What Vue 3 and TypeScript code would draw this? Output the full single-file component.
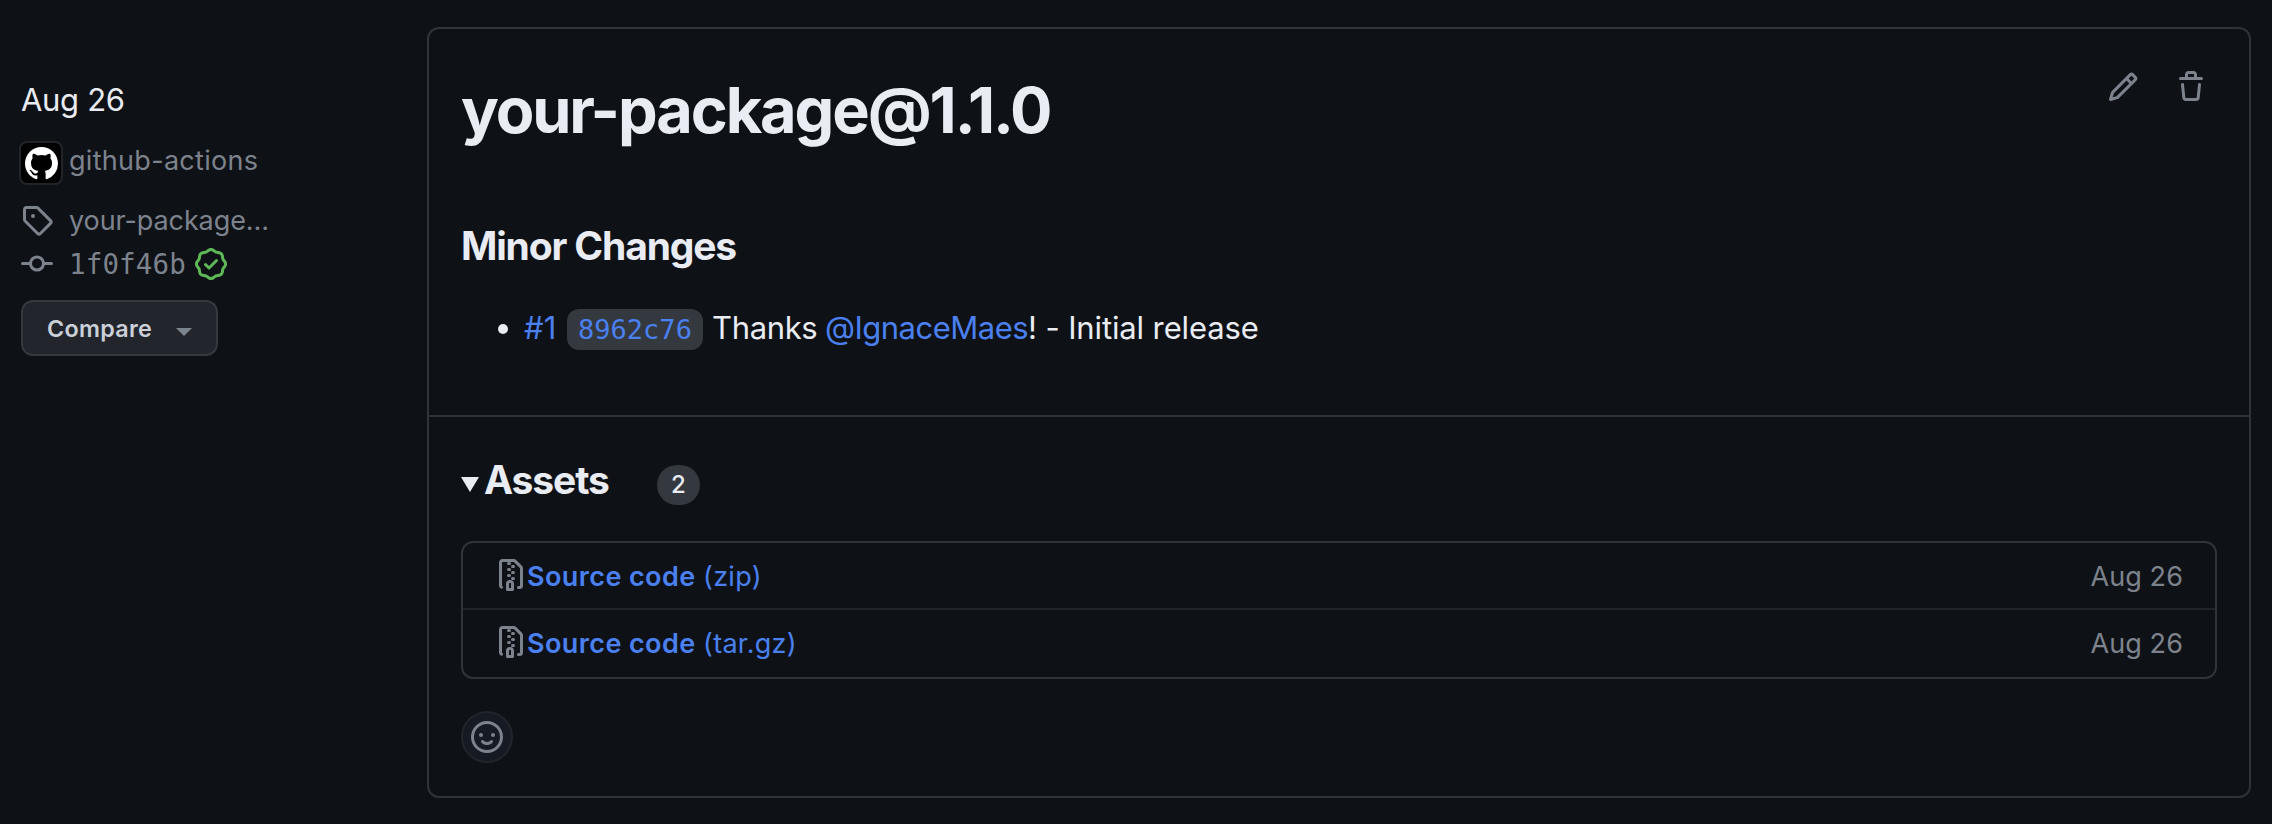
<script setup lang="ts">
interface Asset {
  name: string
  format: string
  date: string
}

const assets: Asset[] = [
  { name: 'Source code', format: '(zip)', date: 'Aug 26' },
  { name: 'Source code', format: '(tar.gz)', date: 'Aug 26' },
]
</script>

<template>
  <div class="page">
    <aside class="meta">
      <div class="date">Aug 26</div>
      <div class="meta-row author">
        <span class="avatar">
          <svg viewBox="0 0 16 16" width="33" height="33"><path fill="#fff" d="M8 0C3.58 0 0 3.58 0 8c0 3.54 2.29 6.53 5.47 7.59.4.07.55-.17.55-.38 0-.19-.01-.82-.01-1.49-2.01.37-2.53-.49-2.69-.94-.09-.23-.48-.94-.82-1.13-.28-.15-.68-.52-.01-.53.63-.01 1.08.58 1.23.82.72 1.21 1.87.87 2.33.66.07-.52.28-.87.51-1.07-1.78-.2-3.64-.89-3.64-3.95 0-.87.31-1.59.82-2.15-.08-.2-.36-1.02.08-2.12 0 0 .67-.21 2.2.82.64-.18 1.32-.27 2-.27s1.36.09 2 .27c1.53-1.04 2.2-.82 2.2-.82.44 1.1.16 1.92.08 2.12.51.56.82 1.27.82 2.15 0 3.07-1.87 3.75-3.65 3.95.29.25.54.73.54 1.48 0 1.07-.01 1.93-.01 2.2 0 .21.15.46.55.38A8.01 8.01 0 0 0 16 8c0-4.42-3.58-8-8-8Z" /></svg>
        </span>
        <span class="author-name">github-actions</span>
      </div>
      <div class="meta-row tag">
        <svg class="icon" viewBox="0 0 16 16"><path d="M1 7.775V2.75C1 1.784 1.784 1 2.75 1h5.025c.464 0 .91.184 1.238.513l6.25 6.25a1.75 1.75 0 0 1 0 2.474l-5.026 5.026a1.75 1.75 0 0 1-2.474 0l-6.25-6.25A1.752 1.752 0 0 1 1 7.775Zm1.5 0c0 .066.026.13.073.177l6.25 6.25a.25.25 0 0 0 .354 0l5.025-5.025a.25.25 0 0 0 0-.354l-6.25-6.25a.25.25 0 0 0-.177-.073H2.75a.25.25 0 0 0-.25.25ZM6 5a1 1 0 1 1 0 2 1 1 0 0 1 0-2Z" /></svg>
        <span class="tag-name">your-package…</span>
      </div>
      <div class="meta-row commit">
        <svg class="icon" viewBox="0 0 16 16"><path d="M11.93 8.5a4.002 4.002 0 0 1-7.86 0H.75a.75.75 0 0 1 0-1.5h3.32a4.002 4.002 0 0 1 7.86 0h3.32a.75.75 0 0 1 0 1.5Zm-1.43-.75a2.5 2.5 0 1 0-5 0 2.5 2.5 0 0 0 5 0Z" /></svg>
        <span class="sha">1f0f46b</span>
        <svg class="icon verified" viewBox="0 0 16 16"><path d="m9.585.52.929.68c.153.112.331.186.518.215l1.138.175a2.678 2.678 0 0 1 2.24 2.24l.174 1.139c.029.187.103.365.215.518l.68.928a2.677 2.677 0 0 1 0 3.17l-.68.928a1.174 1.174 0 0 0-.215.518l-.175 1.138a2.678 2.678 0 0 1-2.241 2.241l-1.138.175a1.17 1.17 0 0 0-.518.215l-.928.68a2.677 2.677 0 0 1-3.17 0l-.928-.68a1.174 1.174 0 0 0-.518-.215L3.83 14.41a2.678 2.678 0 0 1-2.24-2.24l-.175-1.138a1.17 1.17 0 0 0-.215-.518l-.68-.928a2.677 2.677 0 0 1 0-3.17l.68-.928c.112-.153.186-.331.215-.518l.175-1.14a2.678 2.678 0 0 1 2.24-2.24l1.139-.175c.187-.029.365-.103.518-.215l.928-.68a2.677 2.677 0 0 1 3.17 0ZM7.303 1.728l-.927.68a2.67 2.67 0 0 1-1.18.489l-1.137.174a1.179 1.179 0 0 0-.987.987l-.174 1.136a2.677 2.677 0 0 1-.489 1.18l-.68.928a1.18 1.18 0 0 0 0 1.394l.68.927c.256.348.424.753.489 1.18l.174 1.137c.078.509.478.909.987.987l1.136.174a2.67 2.67 0 0 1 1.18.489l.928.68c.414.305.979.305 1.394 0l.927-.68a2.67 2.67 0 0 1 1.18-.489l1.137-.174a1.18 1.18 0 0 0 .987-.987l.174-1.136a2.67 2.67 0 0 1 .489-1.18l.68-.928a1.176 1.176 0 0 0 0-1.394l-.68-.927a2.686 2.686 0 0 1-.489-1.18l-.174-1.137a1.179 1.179 0 0 0-.987-.987l-1.136-.174a2.677 2.677 0 0 1-1.18-.489l-.928-.68a1.176 1.176 0 0 0-1.394 0ZM11.28 6.78l-3.75 3.75a.75.75 0 0 1-1.06 0L4.72 8.78a.751.751 0 0 1 .018-1.042.751.751 0 0 1 1.042-.018L7 8.94l3.22-3.22a.751.751 0 0 1 1.042.018.751.751 0 0 1 .018 1.042Z" /></svg>
      </div>
      <button class="compare" type="button">
        <span>Compare</span>
        <i class="caret"></i>
      </button>
    </aside>

    <main class="card">
      <section class="notes">
        <header class="head">
          <h1>your-package@1.1.0</h1>
          <div class="actions">
            <svg class="icon" viewBox="0 0 16 16"><path d="M11.013 1.427a1.75 1.75 0 0 1 2.474 0l1.086 1.086a1.75 1.75 0 0 1 0 2.474l-8.61 8.61c-.21.21-.47.364-.756.445l-3.251.93a.75.75 0 0 1-.927-.928l.929-3.25c.081-.286.235-.547.445-.758l8.61-8.61Zm.176 4.823L9.75 4.81l-6.286 6.287a.253.253 0 0 0-.064.108l-.558 1.953 1.953-.558a.253.253 0 0 0 .108-.064Zm1.238-3.763a.25.25 0 0 0-.354 0L10.811 3.75l1.439 1.44 1.263-1.263a.25.25 0 0 0 0-.354Z" /></svg>
            <svg class="icon" viewBox="0 0 16 16"><path d="M11 1.75V3h2.25a.75.75 0 0 1 0 1.5H2.75a.75.75 0 0 1 0-1.5H5V1.75C5 .784 5.784 0 6.75 0h2.5C10.216 0 11 .784 11 1.75ZM4.496 6.675l.66 6.6a.25.25 0 0 0 .249.225h5.19a.25.25 0 0 0 .249-.225l.66-6.6a.75.75 0 0 1 1.492.149l-.66 6.6A1.748 1.748 0 0 1 10.595 15h-5.19a1.75 1.75 0 0 1-1.741-1.575l-.66-6.6a.75.75 0 1 1 1.492-.15ZM6.5 1.75V3h3V1.75a.25.25 0 0 0-.25-.25h-2.5a.25.25 0 0 0-.25.25Z" /></svg>
          </div>
        </header>
        <h2>Minor Changes</h2>
        <div class="change">
          <i class="bullet"></i>
          <a class="pr">#1</a>
          <code>8962c76</code>
          <span class="thanks">Thanks</span>
          <a class="user">@IgnaceMaes</a>
          <span class="release">! - Initial release</span>
        </div>
      </section>

      <section class="assets">
        <div class="summary">
          <svg class="disclosure" viewBox="0 0 18 15"><path d="M0 0h18L9 15Z" /></svg>
          <h3>Assets</h3>
          <span class="count">2</span>
        </div>
        <div class="list">
          <div v-for="asset in assets" :key="asset.format" class="asset">
            <svg class="icon" viewBox="0 0 16 16"><path d="M3.5 1.75v11.5c0 .09.048.173.126.217a.75.75 0 0 1-.752 1.298A1.748 1.748 0 0 1 2 13.25V1.75C2 .784 2.784 0 3.75 0h5.586c.464 0 .909.185 1.237.513l2.914 2.914c.329.328.513.773.513 1.237v8.586A1.75 1.75 0 0 1 12.25 15h-.5a.75.75 0 0 1 0-1.5h.5a.25.25 0 0 0 .25-.25V4.664a.25.25 0 0 0-.073-.177L9.513 1.573a.25.25 0 0 0-.177-.073H7.25a.75.75 0 0 1 0 1.5h-.5a.75.75 0 0 1 0-1.5h-3a.25.25 0 0 0-.25.25Zm3.75 8.75h.5c.966 0 1.75.784 1.75 1.75v3a.75.75 0 0 1-.75.75h-2.5a.75.75 0 0 1-.75-.75v-3c0-.966.784-1.75 1.75-1.75ZM6 5.25a.75.75 0 0 1 .75-.75h.5a.75.75 0 0 1 0 1.5h-.5A.75.75 0 0 1 6 5.25Zm.75 2.25h.5a.75.75 0 0 1 0 1.5h-.5a.75.75 0 0 1 0-1.5ZM8 6.75A.75.75 0 0 1 8.75 6h.5a.75.75 0 0 1 0 1.5h-.5A.75.75 0 0 1 8 6.75ZM8.75 3h.5a.75.75 0 0 1 0 1.5h-.5a.75.75 0 0 1 0-1.5ZM8 9.75A.75.75 0 0 1 8.75 9h.5a.75.75 0 0 1 0 1.5h-.5A.75.75 0 0 1 8 9.75Zm-1 2.5v2.25h1v-2.25a.25.25 0 0 0-.25-.25h-.5a.25.25 0 0 0-.25.25Z" /></svg>
            <a class="asset-name">{{ asset.name }}</a>
            <a class="asset-format">{{ asset.format }}</a>
            <span class="asset-date">{{ asset.date }}</span>
          </div>
        </div>
        <button class="react" type="button">
          <svg class="icon" viewBox="0 0 16 16"><path d="M8 0a8 8 0 1 1 0 16A8 8 0 0 1 8 0ZM1.5 8a6.5 6.5 0 1 0 13 0 6.5 6.5 0 0 0-13 0Zm3.82 1.636a.75.75 0 0 1 1.038.175l.007.009c.103.118.22.222.35.31.264.178.683.37 1.285.37.602 0 1.02-.192 1.285-.371.13-.088.247-.192.35-.31l.007-.008a.75.75 0 0 1 1.222.87l-.022-.015c.02.013.021.015.021.015v.001l-.001.002-.002.003-.005.007-.014.019a2.066 2.066 0 0 1-.184.213c-.16.166-.338.316-.53.445-.63.418-1.37.638-2.127.629-.946 0-1.652-.308-2.126-.63a3.331 3.331 0 0 1-.715-.657l-.014-.02-.005-.006-.002-.003v-.002h-.001l.613-.432-.614.43a.75.75 0 0 1 .183-1.044ZM12 7a1 1 0 1 1-2 0 1 1 0 0 1 2 0ZM5 8a1 1 0 1 1 0-2 1 1 0 0 1 0 2Z" /></svg>
        </button>
      </section>
    </main>
  </div>
</template>

<style>
body {
  background: #0e1116;
}
</style>

<style scoped>
.page {
  box-sizing: border-box;
  width: 2272px;
  height: 824px;
  display: flex;
  align-items: flex-start;
  padding: 27px 21px 0;
  background: #0e1116;
  color: #e9ecf2;
  font-family: Inter, "Liberation Sans", sans-serif;
  white-space: nowrap;
}
.page * {
  box-sizing: border-box;
}
.icon {
  display: block;
  flex: none;
  width: 32px;
  height: 32px;
  fill: #7d838d;
}
.meta {
  width: 406px;
  padding-top: 49px;
  color: #7d838d;
  font-size: 27px;
}
.date {
  color: #e9ecf2;
  font-size: 31px;
  line-height: 48px;
  letter-spacing: -0.3px;
}
.meta-row {
  display: flex;
  align-items: center;
  height: 44px;
  line-height: 44px;
}
.author {
  margin: 14px 0 16px -2px;
}
.avatar {
  display: flex;
  align-items: center;
  justify-content: center;
  width: 44px;
  height: 44px;
  margin: 6px 6px 0 0;
  border: 2px solid #222429;
  border-radius: 8px;
  background: #000;
}
.author-name {
  padding-top: 1px;
  letter-spacing: 0.3px;
}
.tag-name,
.sha {
  margin-left: 16px;
}
.tag-name {
  padding-top: 1px;
  letter-spacing: -0.1px;
}
.sha {
  font-family: "DejaVu Sans Mono", monospace;
  font-size: 27.5px;
  letter-spacing: 0.15px;
}
.verified {
  margin-left: 9px;
  fill: #5fb858;
}
.compare {
  display: flex;
  align-items: center;
  width: 197px;
  height: 56px;
  margin: 14px 0 0;
  padding: 0 24px;
  border: 2px solid #35383e;
  border-radius: 12px;
  background: #22252c;
  color: #cad0d8;
  font: 600 23.3px/52px Inter, sans-serif;
  letter-spacing: 0.3px;
}
.compare span {
  padding-top: 1px;
}
.caret {
  margin: 8px 0 0 24px;
  border: 8px solid transparent;
  border-top-color: #7d838d;
  border-bottom: 0;
}
.card {
  width: 1824px;
  height: 771px;
  border: 2px solid #303338;
  border-radius: 12px;
}
.notes {
  height: 388px;
  padding: 42px 32px 0;
  border-bottom: 2px solid #303338;
}
.head {
  display: flex;
  justify-content: space-between;
}
h1,
h2,
h3 {
  margin: 0;
  font-weight: 700;
}
h1 {
  font-size: 63px;
  line-height: 78px;
  letter-spacing: -2.1px;
}
.actions {
  display: flex;
  gap: 36px;
  padding-right: 10px;
}
h2 {
  margin-top: 72px;
  font-size: 39px;
  line-height: 50px;
  letter-spacing: -1.15px;
}
.change {
  display: flex;
  align-items: center;
  height: 48px;
  margin-top: 33px;
  padding-left: 37px;
  font-size: 31px;
  line-height: 48px;
}
.bullet {
  width: 10px;
  height: 10px;
  margin: 2px 16px 0 0;
  border-radius: 50%;
  background: #e9ecf2;
}
a {
  color: #4a80f0;
}
.pr {
  width: 43px;
}
code {
  width: 136px;
  height: 41px;
  margin: 3px 9px 0 0;
  border-radius: 12px;
  background: #34383f;
  color: #4a80f0;
  font: 27px/41px "DejaVu Sans Mono", monospace;
  text-align: center;
}
.thanks {
  width: 113px;
  letter-spacing: -0.35px;
}
.user {
  width: 203px;
  letter-spacing: -0.5px;
}
.release {
  letter-spacing: -0.12px;
}
.assets {
  padding: 33px 32px 0;
}
.summary {
  display: flex;
  align-items: center;
  height: 60px;
}
.disclosure {
  width: 18px;
  height: 15px;
  margin: 9px 5px 0 0;
  fill: #e9ecf2;
}
h3 {
  width: 173px;
  font-size: 39px;
  line-height: 60px;
  letter-spacing: -1.1px;
}
.count {
  width: 43px;
  height: 40px;
  margin-top: 10px;
  border-radius: 20px;
  background: #34383f;
  font-size: 24px;
  font-weight: 500;
  line-height: 40px;
  text-align: center;
}
.list {
  height: 138px;
  margin-top: 31px;
  border: 2px solid #303338;
  border-radius: 12px;
}
.asset {
  display: flex;
  align-items: flex-start;
  height: 67px;
  padding: 10px 32px 0 32px;
  font-size: 27px;
  line-height: 48px;
}
.asset:first-child {
  border-bottom: 2px solid #212429;
}
.asset .icon {
  margin-top: 6px;
}
.asset-name {
  width: 176px;
  font-weight: 600;
  letter-spacing: 0.4px;
}
.asset-format {
  letter-spacing: 0.3px;
}
.asset-date {
  margin-left: auto;
  color: #7d838d;
  letter-spacing: 0.1px;
}
.react {
  display: flex;
  align-items: center;
  justify-content: center;
  width: 52px;
  height: 52px;
  margin: 32px 0 0;
  padding: 0;
  border: 2px solid #212429;
  border-radius: 50%;
  background: #161a22;
}
</style>
